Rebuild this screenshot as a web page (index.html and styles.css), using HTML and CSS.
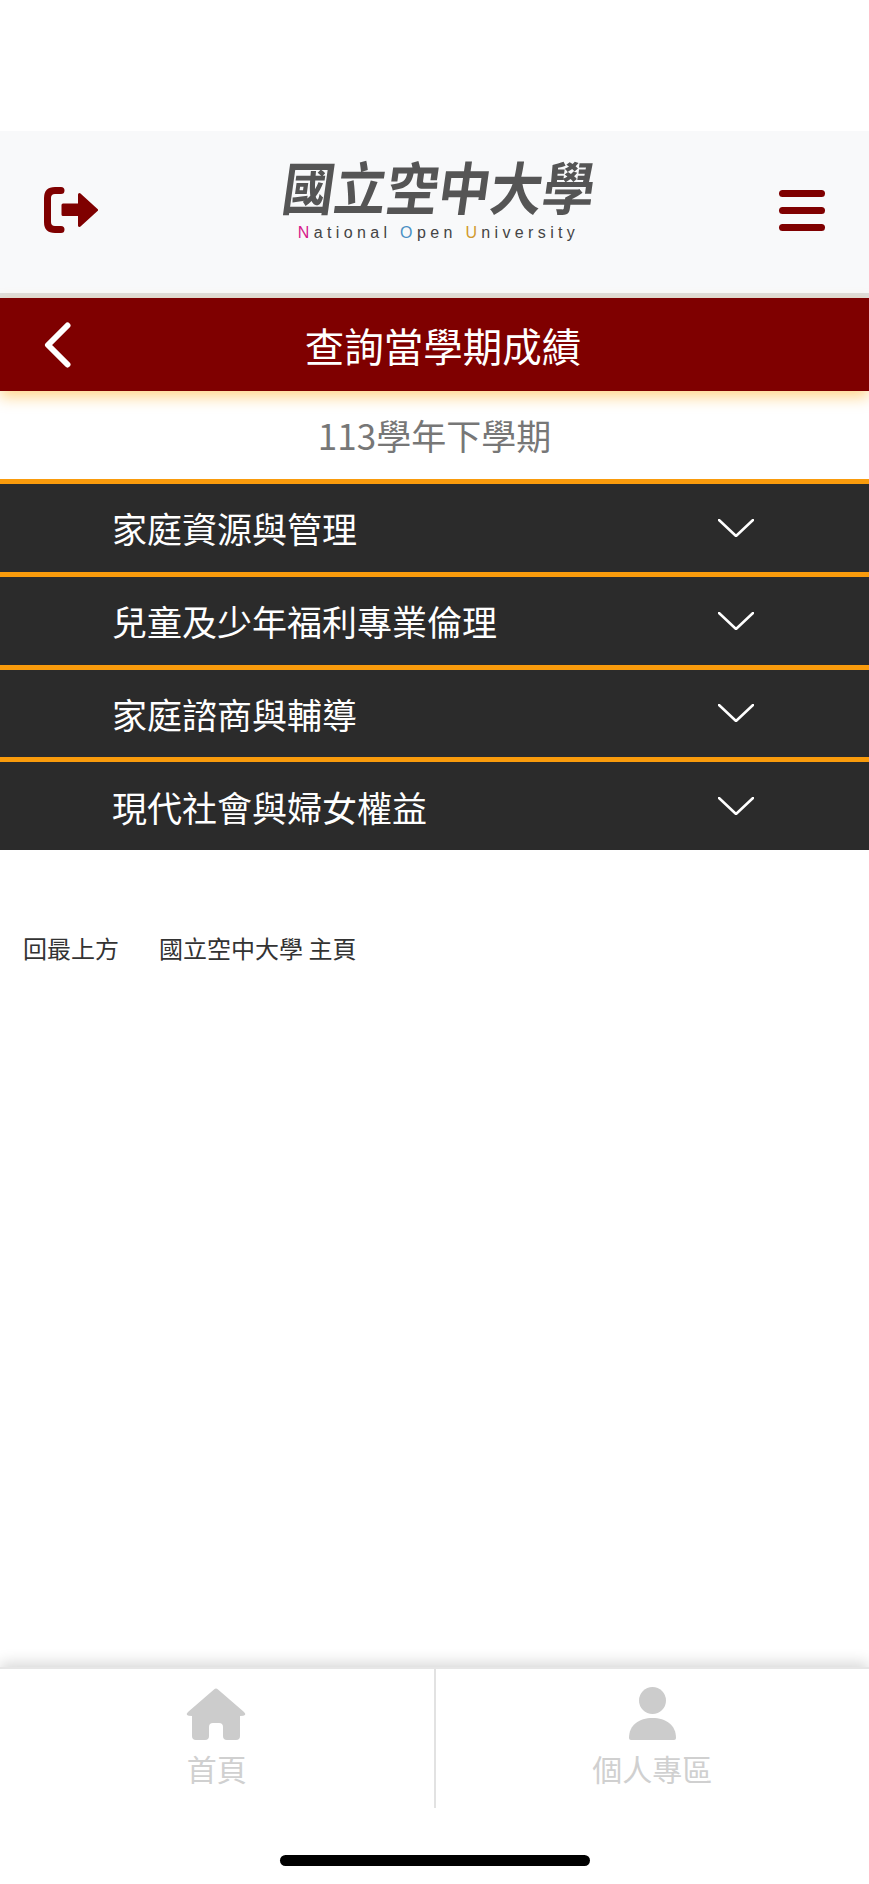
FILE: index.html
```html
<!DOCTYPE HTML>
<html lang="zh-Hant">
    <head>
        <meta name="viewport" content="width=device-width, initial-scale=1.0">
        <title>查詢當學期成績</title>
        <link rel="stylesheet" href="styles.css">
    </head>
    <body>
        <div class="status-space"></div>
        <div class="top-header">
            <svg class="icon-logout" viewBox="0 0 54 46">
                <path class="logout-bracket" d="M17 3.5H11Q3.5 3.5 3.5 11V35Q3.5 42.5 11 42.5H17"/>
                <path class="logout-arrow" d="M19 18H35.5V7.5L52.5 23L35.5 38.5V27.5H19Z"/>
            </svg>
            <div class="logo">
                <div class="logo-cn">國立空中大學</div>
                <div class="logo-en"><span class="c-n">N</span>ational <span class="c-o">O</span>pen <span class="c-u">U</span>niversity</div>
            </div>
            <div class="hamburger"><span></span><span></span><span></span></div>
        </div>
        <div class="title-bar">
            <svg class="icon-back" viewBox="0 0 27 46">
                <path d="M23.5 3.5L4 23L23.5 42.5"/>
            </svg>
            <h1>查詢當學期成績</h1>
        </div>
        <p class="term">113學年下學期</p>
        <ul class="course-list">
            <li>
                <span>家庭資源與管理</span>
                <svg class="icon-down" viewBox="0 0 36 18"><path d="M1 1L18 17L35 1"/></svg>
            </li>
            <li>
                <span>兒童及少年福利專業倫理</span>
                <svg class="icon-down" viewBox="0 0 36 18"><path d="M1 1L18 17L35 1"/></svg>
            </li>
            <li>
                <span>家庭諮商與輔導</span>
                <svg class="icon-down" viewBox="0 0 36 18"><path d="M1 1L18 17L35 1"/></svg>
            </li>
            <li>
                <span>現代社會與婦女權益</span>
                <svg class="icon-down" viewBox="0 0 36 18"><path d="M1 1L18 17L35 1"/></svg>
            </li>
        </ul>
        <div class="foot-links">
            <a>回最上方</a>
            <a>國立空中大學 主頁</a>
        </div>
        <div class="spacer"></div>
        <div class="bottom-nav">
            <div class="nav-items">
                <div class="nav-item">
                    <svg class="icon-home" viewBox="0 0 61 53">
                        <path d="M30 1.5Q29 1.5 28 2.500L2 25Q0 27 1 28Q2 29 6 29V49Q6 53 10 53H19Q23 53 23 49V40Q23 36 27 36H33Q37 36 37 40V49Q37 53 41 53H50Q54 53 54 49V29Q58 29 59 28Q60 27 58 25L32 2.500Q31 1.500 30 1.500Z"/>
                    </svg>
                    <span>首頁</span>
                </div>
                <div class="nav-item">
                    <svg class="icon-user" viewBox="0 0 47 53">
                        <circle cx="23.5" cy="13.500" r="13.500"/>
                        <path d="M0 51C0 38 10 31 23.500 31S47 38 47 51Q47 53 45 53H2Q0 53 0 51Z"/>
                    </svg>
                    <span>個人專區</span>
                </div>
            </div>
            <div class="home-strip"><div class="home-bar"></div></div>
        </div>
    </body>
</html>
```
FILE: styles.css
```css
*{
    box-sizing: border-box;
}
body{
    margin: 0;
    height: 1884px;
    display: flex;
    flex-direction: column;
    overflow: hidden;
    background: #fff;
    font-family: "Noto Sans CJK TC", "Liberation Sans", sans-serif;
}
.status-space{
    height: 131px;
}
.top-header{
    height: 167px;
    background: #f8f9fa;
    border-bottom: 5px solid #dedede;
    display: flex;
    justify-content: space-between;
    align-items: flex-start;
    padding: 0 44px;
}
.icon-logout{
    width: 54px;
    height: 46px;
    margin-top: 56px;
}
.logout-bracket{
    fill: none;
    stroke: #7f0000;
    stroke-width: 7;
    stroke-linecap: round;
}
.logout-arrow{
    fill: #7f0000;
    stroke: #7f0000;
    stroke-width: 3;
    stroke-linejoin: round;
}
.logo{
    width: 336px;
    text-align: center;
    margin-top: 22px;
}
.logo-cn{
    height: 71px;
    font-size: 52px;
    line-height: 66px;
    font-weight: 700;
    color: #555;
    white-space: nowrap;
    transform: skewX(-8deg) scaleY(1.1);
}
.logo-en{
    font-family: "Liberation Sans", sans-serif;
    font-size: 16px;
    line-height: 18px;
    letter-spacing: 4.35px;
    color: #444;
    white-space: nowrap;
}
.c-n{
    color: #d6198a;
}
.c-o{
    color: #4a8fc4;
}
.c-u{
    color: #d19a2e;
}
.hamburger{
    width: 46px;
    margin-top: 59px;
    display: flex;
    flex-direction: column;
    gap: 10px;
}
.hamburger span{
    height: 7px;
    border-radius: 4px;
    background: #7f0000;
}
.title-bar{
    position: relative;
    height: 93px;
    background: #7f0000;
    box-shadow: 0 6px 14px rgba(255,165,0,0.45);
    display: flex;
    align-items: center;
    padding: 0 54px 0 44px;
}
.icon-back{
    width: 27px;
    height: 46px;
    flex-shrink: 0;
}
.icon-back path{
    fill: none;
    stroke: #fff;
    stroke-width: 6;
    stroke-linecap: round;
    stroke-linejoin: round;
}
.title-bar h1{
    flex: 1;
    margin: 0;
    text-align: center;
    font-size: 39.500px;
    font-weight: 400;
    line-height: 1;
    color: #fff;
}
.term{
    height: 88px;
    margin: 0;
    text-align: center;
    font-size: 35px;
    line-height: 88px;
    color: #777;
}
.course-list{
    margin: 0;
    padding: 0;
    list-style: none;
}
.course-list li{
    height: 92.750px;
    background: #2b2b2b;
    border-top: 5px solid #f99b0c;
    display: flex;
    justify-content: space-between;
    align-items: center;
    padding: 0 115px 0 112px;
    font-size: 35px;
    color: #fff;
}
.icon-down{
    width: 36px;
    height: 18px;
}
.icon-down path{
    fill: none;
    stroke: #fff;
    stroke-width: 2.500;
    stroke-linecap: round;
    stroke-linejoin: round;
}
.foot-links{
    margin-top: 80px;
    padding-left: 23px;
    display: flex;
    gap: 40px;
    font-size: 24px;
    line-height: 36px;
    color: #333;
}
.spacer{
    flex: 1;
}
.bottom-nav{
    position: relative;
    background: #fff;
    border-top: 2px solid #e6e6e6;
    box-shadow: 0 -4px 14px rgba(0,0,0,0.16);
}
.nav-items{
    display: flex;
    height: 139px;
}
.nav-item{
    flex: 1;
    display: flex;
    flex-direction: column;
    align-items: center;
    padding-top: 18px;
    font-size: 30px;
    line-height: 36px;
    color: #d0d0d0;
}
.nav-item + .nav-item{
    border-left: 2px solid #e2e2e2;
}
.nav-item svg{
    height: 53px;
    fill: #ccc;
    margin-bottom: 10px;
}
.icon-home{
    width: 61px;
}
.icon-user{
    width: 47px;
}
.home-strip{
    height: 76px;
    padding-top: 47px;
    display: flex;
    justify-content: center;
}
.home-bar{
    width: 310px;
    height: 11px;
    border-radius: 6px;
    background: #000;
}
```
